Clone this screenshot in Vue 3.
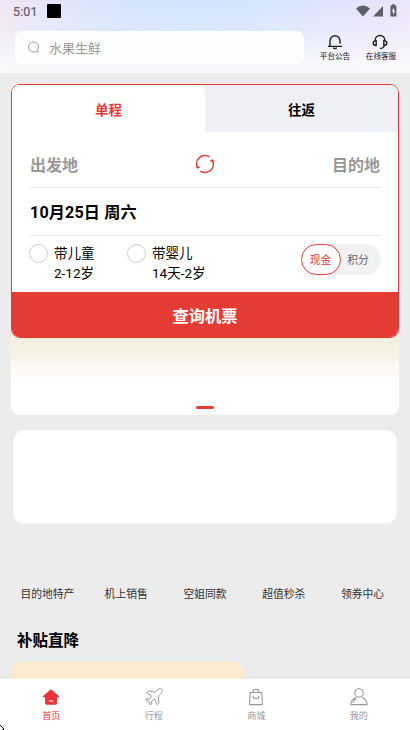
<script setup>
import { ref } from 'vue'

const trip = ref('one')
const pay = ref('cash')
const passengers = [
  { label: '带儿童', age: '2-12岁' },
  { label: '带婴儿', age: '14天-2岁' },
]
const links = ['目的地特产', '机上销售', '空姐同款', '超值秒杀', '领券中心']
</script>

<template>
  <div class="page">
    <header class="header">
      <div class="status">
        <span class="time">5:01</span>
        <span class="square"></span>
        <svg class="signals" width="42" height="14" viewBox="0 0 42 14" fill="#5f5f65">
          <path d="M0 4.5 Q7-1.3 14 4.5 L7 12.5z" />
          <path d="M27 2V12.5H17z" />
          <path fill-rule="evenodd" d="M34.4 1.5h1.6V.3h2.8v1.2h1.6v11h-6zM38 3.5L35.6 7.5H37V11l2.4-4.3H38z" />
        </svg>
      </div>
      <div class="tools">
        <div class="search">
          <svg width="13" height="13" viewBox="0 0 13 13" fill="none" stroke="#999" stroke-width="1">
            <circle cx="5.5" cy="6" r="5" />
            <path d="M8.8 10.4H10L11 12" />
          </svg>
          <span>水果生鲜</span>
        </div>
        <div class="tool">
          <svg width="16" height="16" viewBox="0 0 16 16" fill="none" stroke="#222" stroke-width="1.4">
            <path d="M3 12V6.8a5 5 0 0 1 10 0V9.8M1 12.4h14M6.2 13.7q1.8 1.6 3.6 0" />
          </svg>
          <span>平台公告</span>
        </div>
        <div class="tool shifted">
          <svg width="16" height="16" viewBox="0 0 16 16" fill="none" stroke="#222" stroke-width="1.4">
            <path d="M3.2 6.5V6a4.8 4.5 0 0 1 9.6 0v.5M4.2 6.6v5C2.2 11.6 1.2 10.6 1.2 9.1s1-2.5 3-2.5zM11.8 6.6v5c2 0 3-1 3-2.5s-1-2.5-3-2.5zM12.5 11.4q-.8 3-4.6 3.1" />
          </svg>
          <span>在线客服</span>
        </div>
      </div>
    </header>

    <main class="content">
      <section class="panel">
        <div class="booking">
          <div class="tabs">
            <button class="tab" :class="{ active: trip === 'one' }" @click="trip = 'one'">单程</button>
            <button class="tab" :class="{ active: trip === 'round' }" @click="trip = 'round'">往返</button>
          </div>
          <div class="form">
            <div class="route">
              <span>出发地</span>
              <svg width="20" height="20" viewBox="0 0 20 20" fill="none" stroke="#e43c35" stroke-width="1.4">
                <path d="M2.9 14.5A8.4 8.4 0 0 1 14.6 2.9M17.1 5.5A8.4 8.4 0 0 1 5.4 17.1" />
                <path d="M2.1 11.4V13.3H4.7M17.9 8.6V6.7h-2.6" />
              </svg>
              <span class="destination">目的地</span>
            </div>
            <div class="date">10月25日 周六</div>
            <div class="options">
              <div v-for="p in passengers" :key="p.label" class="option">
                <span class="radio"></span>
                <span>{{ p.label }}<br />{{ p.age }}</span>
              </div>
              <div class="pay">
                <button class="pay-item" :class="{ active: pay === 'cash' }" @click="pay = 'cash'">现金</button>
                <button class="pay-item" :class="{ active: pay === 'points' }" @click="pay = 'points'">积分</button>
              </div>
            </div>
          </div>
          <button class="submit">查询机票</button>
        </div>
        <div class="banner"><span class="dot"></span></div>
      </section>

      <section class="blank-card"></section>

      <nav class="links">
        <span v-for="l in links" :key="l">{{ l }}</span>
      </nav>

      <h2 class="title">补贴直降</h2>
      <div class="deal"></div>
    </main>

    <nav class="tabbar">
      <div class="nav-item current">
        <svg width="18" height="18" viewBox="0 0 18 18">
          <path d="M9 1.2L17.2 8.3q.3 1-.7 1H15v6q0 1.4-1.4 1.4H4.4Q3 16.7 3 15.3v-6H1.5q-1 0-.7-1z" fill="#e9343b" />
          <path d="M6.8 13h4.4" stroke="#fff" stroke-width="1" />
        </svg>
        <span>首页</span>
      </div>
      <div class="nav-item">
        <svg width="18" height="18" viewBox="0 0 18 18" fill="none" stroke="#999" stroke-width="1" stroke-linejoin="round">
          <path d="M16.8 1.2c-1.3-.9-3.3-.6-4.6.7L10 4.2 3.6 2.9 1.6 4.9l5 3-2.3 3.4-2.6-.8L.6 12l3.4 1.8 1.4 3.4 1.4-1.3-.4-2.5 3.2-2.5 2.6 5.8 1.9-2-.9-6.3 2.4-2.4c1.5-1.5 2.5-3.4 1.2-4.8z" />
        </svg>
        <span>行程</span>
      </div>
      <div class="nav-item">
        <svg width="18" height="18" viewBox="0 0 18 18" fill="none" stroke="#999" stroke-width="1.1" stroke-linejoin="round">
          <path d="M3.2 4.5h11.6l.6 12.1H2.6zM5.8 4.3C6 .4 12 .4 12.2 4.3M6 8.2c.5 3.4 5.5 3.4 6 0" />
        </svg>
        <span>商城</span>
      </div>
      <div class="nav-item">
        <svg width="18" height="18" viewBox="0 0 18 18" fill="none" stroke="#999" stroke-width="1.1" stroke-linejoin="round">
          <circle cx="9" cy="4.9" r="4.2" />
          <path d="M6.4 9.2C3.2 10.4 1 13 .8 16.6h16.4c-.2-3.6-2.4-6.2-5.6-7.4M3 14.8c.5-2 1.6-3.3 3.3-4.1" />
        </svg>
        <span>我的</span>
      </div>
    </nav>
    <svg class="corner" width="5" height="6" viewBox="0 0 5 6" fill="#111">
      <path d="M0 1h1v1H0zM1 2h1v1H1zM2 3h1v1H2zM3 4h1v2H2V5h1z" />
    </svg>
  </div>
</template>

<style>
body {
  margin: 0;
  background: #ececec;
}
</style>

<style scoped>
* {
  box-sizing: border-box;
}
.page {
  position: relative;
  display: flex;
  flex-direction: column;
  height: 730px;
  overflow: hidden;
  background: #ececec;
  color: #000;
  font-family: Roboto, "Noto Sans CJK SC", sans-serif;
}
button {
  padding: 0;
  border: 0;
  background: none;
  color: inherit;
  font-family: inherit;
}
svg {
  display: block;
  flex: none;
}
.header {
  flex: none;
  height: 73px;
  background:
    linear-gradient(180deg, rgba(250, 250, 252, 0) 0%, rgba(250, 250, 252, 0.25) 40%, #fafafc 96%),
    linear-gradient(115deg, #f4e4f3 0%, #e3e5f9 12%, #d5e4fc 28%, #d1e4fe 45%, #d5e5fd 62%, #e6e3fa 85%, #f1e7fa 100%);
}
.status {
  display: flex;
  align-items: center;
  height: 22px;
  padding: 0 12px 0 13px;
  color: #5f5f65;
}
.time {
  width: 34px;
  padding-top: 1px;
  font-size: 12.5px;
  font-weight: 400;
  letter-spacing: 0.1px;
  -webkit-text-stroke: 0.2px #5f5f65;
}
.square {
  width: 14px;
  height: 14px;
  border-radius: 1px;
  background: #000;
}
.signals {
  margin-left: auto;
}
.tools {
  display: flex;
  padding: 9px 6px 0 15px;
}
.search {
  display: flex;
  align-items: center;
  gap: 8px;
  width: 289px;
  height: 33px;
  margin-right: 8px;
  padding-left: 13px;
  border-radius: 7px;
  background: rgba(255, 255, 255, 0.9);
  color: #999;
  font-size: 13px;
}
.search span {
  padding-bottom: 1px;
}
.tool {
  display: flex;
  flex-direction: column;
  align-items: center;
  gap: 1px;
  width: 46px;
  padding-top: 3px;
  color: #222;
  font-size: 7.6px;
  line-height: 11px;
  white-space: nowrap;
}
.tool.shifted svg {
  margin-right: 2px;
}
.content {
  flex: 1;
  min-height: 0;
  padding: 11px 11px 0;
}
.panel {
  height: 331px;
  width: 388px;
  border-radius: 9px;
  background: #fff;
}
.booking {
  position: relative;
  z-index: 1;
  height: 254px;
  overflow: hidden;
  border: 1px solid #e43c35;
  border-radius: 9px;
  background: #fff;
}
.tabs {
  display: flex;
  height: 47px;
  background: #eff0f5;
}
.tab {
  flex: 1;
  font-size: 13.5px;
  font-weight: 700;
}
.tab.active {
  border-radius: 0 8px 0 0;
  background: #fff;
  color: #e43c35;
}
.form {
  height: 160px;
  padding: 0 17px 0 18px;
}
.route {
  display: flex;
  align-items: center;
  justify-content: space-between;
  height: 56px;
  padding: 9px 1px 0 0;
  border-bottom: 1px solid #e6e6e6;
  color: #999;
  font-size: 16px;
  font-weight: 700;
}
.date {
  height: 48px;
  padding-top: 1px;
  border-bottom: 1px solid #e6e6e6;
  font-size: 16.1px;
  font-weight: 700;
  letter-spacing: 0.15px;
  line-height: 47px;
}
.options {
  display: flex;
  margin-left: -1px;
  padding-top: 8px;
}
.option {
  display: flex;
  gap: 6px;
  width: 98px;
  font-size: 13.5px;
  line-height: 19.5px;
  white-space: nowrap;
}
.radio {
  flex: none;
  width: 19px;
  height: 19px;
  border: 1px solid #ccc;
  border-radius: 50%;
}
.pay {
  display: flex;
  width: 80px;
  height: 31px;
  margin: 0 0.5px 0 auto;
  border-radius: 16px;
  background: #f2f2f2;
}
.pay-item {
  width: 35px;
  padding-bottom: 1px;
  color: #666;
  font-size: 10.8px;
}
.pay-item.active {
  width: 40px;
  border: 1px solid #e43c35;
  border-radius: 16px;
  background: #fff;
  color: #e43c35;
}
.submit {
  display: block;
  width: 100%;
  height: 45px;
  padding-top: 1px;
  background: #e43c35;
  color: #fff;
  font-size: 16.3px;
  font-weight: 700;
}
.banner {
  display: flex;
  align-items: flex-end;
  justify-content: center;
  height: 86px;
  margin-top: -9px;
  padding-bottom: 6px;
  border-radius: 0 0 9px 9px;
  background: linear-gradient(180deg, #f7eee1 0%, #f8efe3 22%, #fff 62%);
}
.dot {
  width: 18px;
  height: 3px;
  border-radius: 2px;
  background: #e43c35;
}
.blank-card {
  height: 94px;
  margin: 15px 2px 0;
  border: 1px solid #f8f8f8;
  border-radius: 11px;
  background: #fff;
}
.links {
  display: flex;
  margin: 61px -3px 0;
}
.links span {
  flex: 1;
  color: #333;
  font-size: 10.8px;
  line-height: 20px;
  text-align: center;
}
.title {
  margin: 24px 0 0 6px;
  font-size: 15.5px;
  font-weight: 700;
  line-height: 24px;
}
.deal {
  width: 232px;
  height: 60px;
  margin-top: 9px;
  border-radius: 10px;
  background: #ffecce;
}
.tabbar {
  position: relative;
  z-index: 2;
  display: flex;
  flex: none;
  height: 51px;
  background: #fff;
}
.nav-item {
  display: flex;
  flex: 1;
  flex-direction: column;
  align-items: center;
  gap: 4px;
  padding-top: 9px;
  color: #999;
  font-size: 9.1px;
  line-height: 13px;
}
.nav-item.current {
  color: #e9343b;
}
.corner {
  position: absolute;
  z-index: 3;
  bottom: 0;
  left: 0;
}
</style>
